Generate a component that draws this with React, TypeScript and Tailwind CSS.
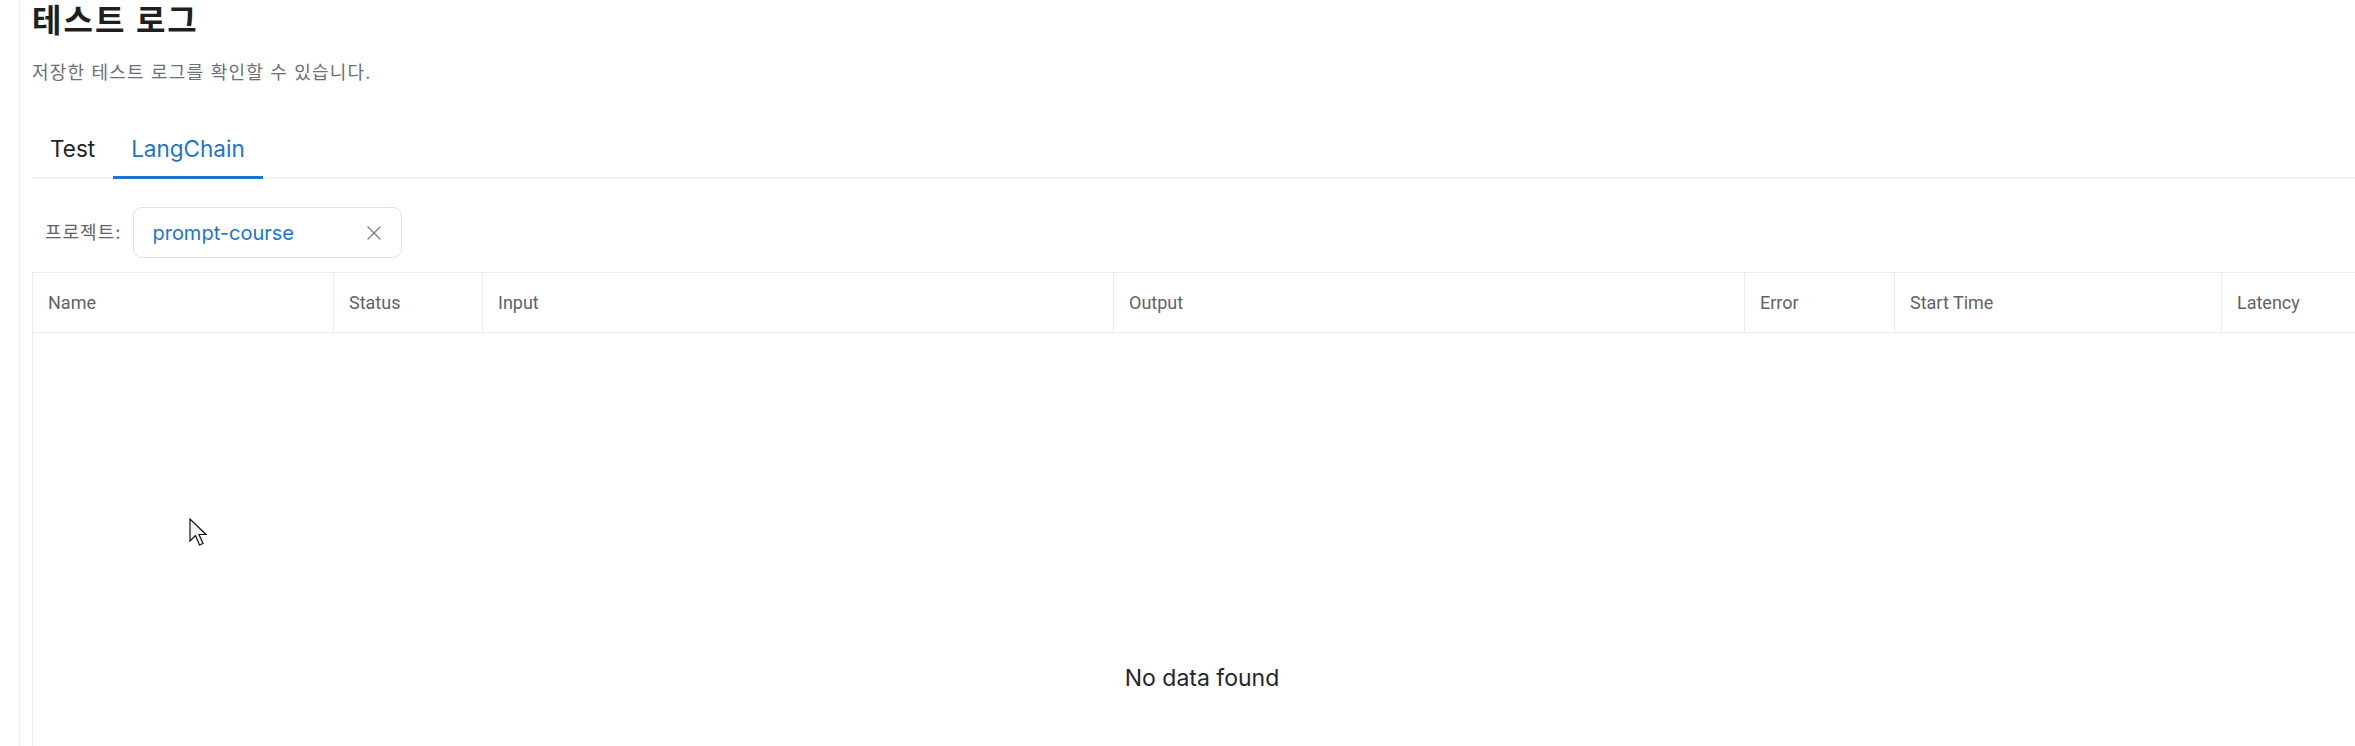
import React from 'react';

const columns = [
  { label: 'Name', w: 'w-[301px]' },
  { label: 'Status', w: 'w-[149px]' },
  { label: 'Input', w: 'w-[631px]' },
  { label: 'Output', w: 'w-[631px]' },
  { label: 'Error', w: 'w-[150px]' },
  { label: 'Start Time', w: 'w-[327px]' },
  { label: 'Latency', w: 'w-[150px]' },
];

const App: React.FC = () => {
  return (
    <div className="relative h-[746px] w-[2355px] overflow-hidden bg-white font-['Inter','Noto_Sans_CJK_KR',sans-serif] text-[#212529]">
      <div className="flex h-full">
        {/* sidebar edge */}
        <div className="w-[20px] shrink-0 border-r border-[#ededed]" />

        <main className="flex min-w-0 flex-1 flex-col pl-[12px]">
          <h1 className="mt-[2px] text-[32px] font-bold leading-[38px] tracking-[2px] text-[#1f1f1f]">테스트 로그</h1>
          <p className="mt-[19px] text-[18px] leading-[27px] tracking-[1.2px] text-[#6b6f76]">저장한 테스트 로그를 확인할 수 있습니다.</p>

          {/* tabs */}
          <div className="mt-[35px] flex border-b-2 border-[#f1f3f5]">
            <button className="-mb-[2px] flex h-[58px] items-center border-b-[3px] border-transparent px-[18px] text-[22.5px] text-[#212529]">
              Test
            </button>
            <button className="-mb-[2px] flex h-[58px] items-center border-b-[3px] border-[#1c74d0] px-[18px] text-[22.5px] text-[#1c74d0]">
              LangChain
            </button>
          </div>

          {/* project filter */}
          <div className="mt-[28px] flex h-[51px] items-center pl-[13px]">
            <span className="text-[18px] tracking-[1px] text-[#5f6368]">프로젝트:</span>
            <div className="ml-[12px] flex h-[51px] w-[269px] items-center justify-between rounded-[9px] border border-[#dee2e6] pl-[18px] pr-[19px]">
              <span className="text-[20px] text-[#1c74d0]">prompt-course</span>
              <svg width="16" height="16" viewBox="0 0 16 16" fill="none" stroke="#7a7f87" strokeWidth="1.3" strokeLinecap="round">
                <path d="M2 2L14 14M14 2L2 14" />
              </svg>
            </div>
          </div>

          {/* table */}
          <div className="mt-[14px] w-[2339px] shrink-0 border-l border-t border-[#e9ecef]">
            <div className="flex h-[60px] border-b border-[#e9ecef]">
              {columns.map((c) => (
                <div
                  key={c.label}
                  className={`${c.w} flex shrink-0 items-center border-r border-[#e9ecef] px-[15px] font-['Roboto',sans-serif] text-[18px] text-[#5f6368]`}
                >
                  {c.label}
                </div>
              ))}
            </div>
            <div className="flex h-[690px] items-center justify-center">
              <span className="text-[23px] text-[#25262b]">No data found</span>
            </div>
          </div>
        </main>
      </div>

      {/* mouse pointer */}
      <svg className="absolute left-[189px] top-[518px]" width="20" height="30" viewBox="0 0 20 30">
        <path
          d="M1 1 L1 23 L6.5 17.5 L10.5 27 L14 25.5 L10 16.5 L17 16.5 Z"
          fill="#f4f4f4"
          stroke="#111"
          strokeWidth="1.2"
          strokeLinejoin="miter"
        />
      </svg>
    </div>
  );
};

export default App;
